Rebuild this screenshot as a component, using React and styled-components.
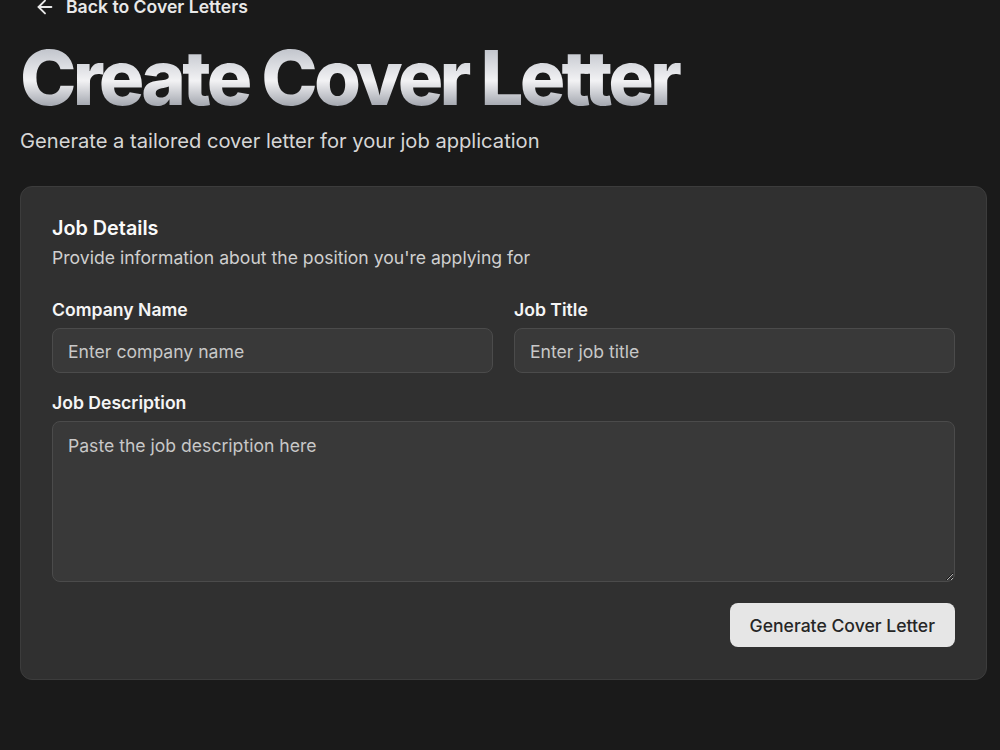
import styled, { createGlobalStyle } from 'styled-components';
import { ArrowLeft } from 'lucide-react';

const GlobalStyle = createGlobalStyle`
  html, body {
    margin: 0;
    background: #1a1a1a;
    font-family: Inter, "Noto Sans", sans-serif;
    color: #f5f5f5;
  }
  * { box-sizing: border-box; }
`;

const Page = styled.main`
  width: 967px;
  margin: -6px 0 0 20px;
  padding-bottom: 70px;
`;

const BackLink = styled.a`
  display: flex;
  width: fit-content;
  height: 26px;
  align-items: center;
  gap: 10px;
  margin-left: 14px;
  font-size: 17.6px;
  font-weight: 600;
  line-height: 26px;
  color: #e8e8e8;
  text-decoration: none;
`;

const Title = styled.h1`
  margin: 19px 0 0 0;
  font-size: 76px;
  font-weight: 800;
  line-height: 76px;
  letter-spacing: -0.05em;
  background: linear-gradient(to bottom, #c4c7ce 15%, #f2f2f4 55%, #9a9ea7 92%);
  -webkit-background-clip: text;
  background-clip: text;
  color: transparent;
`;

const Subtitle = styled.p`
  margin: 12px 0 0 0;
  font-size: 20.15px;
  line-height: 28px;
  color: #d6d6d6;
`;

const Card = styled.section`
  margin-top: 31px;
  padding: 28px 31px 32px;
  background: #303030;
  border: 1px solid #3c3c3c;
  border-radius: 12px;
`;

const CardTitle = styled.h2`
  margin: 0;
  font-size: 19.8px;
  font-weight: 600;
  line-height: 26px;
  color: #fafafa;
`;

const CardText = styled.p`
  margin: 4px 0 0 0;
  font-size: 17.6px;
  line-height: 26px;
  color: #cfcfcf;
`;

const Fields = styled.div`
  display: grid;
  grid-template-columns: 1fr 1fr;
  column-gap: 21px;
  row-gap: 19px;
  margin-top: 28px;
`;

const Field = styled.label`
  display: flex;
  flex-direction: column;
  gap: 7px;
  grid-column: ${(p) => (p.$wide ? '1 / -1' : 'auto')};
`;

const Label = styled.span`
  font-size: 17.6px;
  font-weight: 600;
  line-height: 22px;
  color: #f5f5f5;
`;

const Input = styled.input`
  height: 45px;
  padding: 2px 15px 0;
  background: #393939;
  border: 1px solid #4b4b4b;
  border-radius: 8px;
  font-family: inherit;
  font-size: 17.6px;
  color: #f5f5f5;
  outline: none;
  &::placeholder { color: #c8c8c8; }
`;

const TextArea = styled.textarea`
  height: 161px;
  padding: 11px 15px;
  background: #393939;
  border: 1px solid #4b4b4b;
  border-radius: 8px;
  font-family: inherit;
  font-size: 17.6px;
  line-height: 26px;
  color: #f5f5f5;
  resize: vertical;
  outline: none;
  &::placeholder { color: #c8c8c8; }
`;

const Actions = styled.div`
  display: flex;
  justify-content: flex-end;
  margin-top: 21px;
`;

const Button = styled.button`
  height: 44px;
  padding: 0 20px;
  background: #e6e6e6;
  border: none;
  border-radius: 8px;
  font-family: inherit;
  font-size: 17.6px;
  font-weight: 500;
  color: #262626;
  cursor: pointer;
`;

export default function App() {
  return (
    <>
      <GlobalStyle />
      <Page>
        <BackLink href="#">
          <ArrowLeft size={22} strokeWidth={2} />
          Back to Cover Letters
        </BackLink>
        <Title>Create Cover Letter</Title>
        <Subtitle>Generate a tailored cover letter for your job application</Subtitle>
        <Card>
          <CardTitle>Job Details</CardTitle>
          <CardText>Provide information about the position you're applying for</CardText>
          <Fields>
            <Field>
              <Label>Company Name</Label>
              <Input placeholder="Enter company name" />
            </Field>
            <Field>
              <Label>Job Title</Label>
              <Input placeholder="Enter job title" />
            </Field>
            <Field $wide>
              <Label>Job Description</Label>
              <TextArea placeholder="Paste the job description here" />
            </Field>
          </Fields>
          <Actions>
            <Button>Generate Cover Letter</Button>
          </Actions>
        </Card>
      </Page>
    </>
  );
}
